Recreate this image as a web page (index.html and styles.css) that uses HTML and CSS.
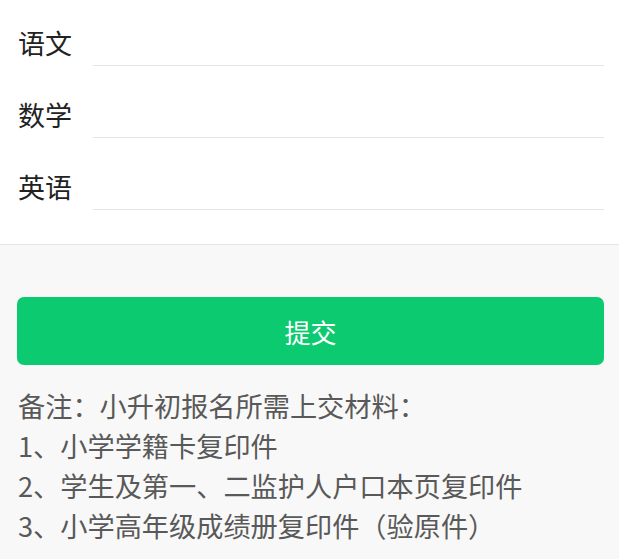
FILE: index.html
```html
<!DOCTYPE html>
<html lang="zh-CN">
<head>
<meta charset="utf-8">
<title>小升初报名</title>
<link rel="stylesheet" href="styles.css">
</head>
<body>
<div class="page">
  <section class="form">
    <div class="row"><label class="label">语文</label><input class="field" type="text"></div>
    <div class="row"><label class="label">数学</label><input class="field" type="text"></div>
    <div class="row"><label class="label">英语</label><input class="field" type="text"></div>
  </section>
  <div class="actions">
    <button class="submit" type="button">提交</button>
  </div>
  <div class="notes">
    <p>备注：小升初报名所需上交材料：</p>
    <p>1、小学学籍卡复印件</p>
    <p>2、学生及第一、二监护人户口本页复印件</p>
    <p>3、小学高年级成绩册复印件（验原件）</p>
  </div>
</div>
</body>
</html>
```
FILE: styles.css
```css
* { box-sizing: border-box; }
html, body {
  margin: 0;
  padding: 0;
  background: #f8f8f8;
  font-family: "Noto Sans CJK SC", "Noto Sans", sans-serif;
}
.page {
  display: flex;
  flex-direction: column;
}
.form {
  background: #fff;
  border-bottom: 1px solid #e6e6e6;
  padding: 20px 15px 34px 18px;
  display: flex;
  flex-direction: column;
  gap: 26px;
}
.row {
  display: flex;
  align-items: center;
  height: 46px;
}
.label {
  width: 75px;
  flex: none;
  font-size: 27px;
  color: #222;
  line-height: 46px;
}
.field {
  flex: 1;
  height: 46px;
  border: none;
  border-bottom: 1px solid #e5e5e5;
  outline: none;
  background: transparent;
  font-size: 26px;
  padding: 0;
}
.actions {
  padding: 52px 15px 0 17px;
}
.submit {
  display: block;
  width: 100%;
  height: 68px;
  border: none;
  border-radius: 7px;
  background: #0bca6f;
  color: #fff;
  font-family: inherit;
  font-size: 26px;
  padding: 0;
}
.notes {
  padding: 20px 18px 0 18px;
  color: #595959;
  font-size: 27.2px;
  line-height: 40px;
}
.notes p {
  margin: 0;
}
```
